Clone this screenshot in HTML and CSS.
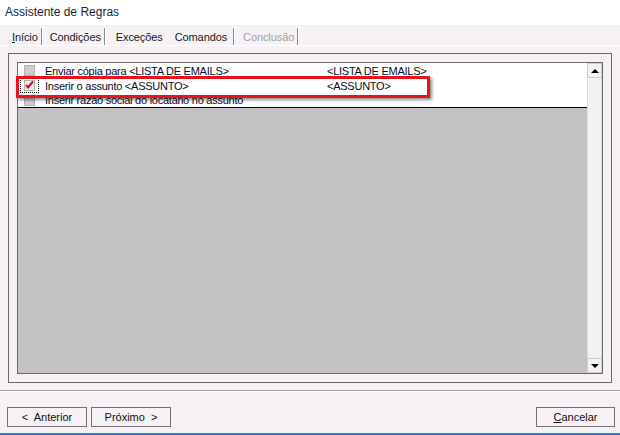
FILE: index.html
```html
<!DOCTYPE html>
<html lang="pt">
<head>
  <meta charset="UTF-8">
  <title>Assistente de Regras</title>
  <link rel="stylesheet" href="styles.css">
</head>
<body>

  <div class="window">
      <div class="titlebar">Assistente de Regras</div>

      <div class="tabs">
          <span class="tab sep"><u>I</u>nício</span>
          <span class="tab sep">Condições</span>
          <span class="tab">Exceções</span>
          <span class="tab active sep">Comandos</span>
          <span class="tab disabled sep">Conclusão</span>
      </div>

      <div class="page">
          <div class="listbox">
              <div class="list">
                  <div class="rows">
                      <div class="row">
                          <span class="check"></span>
                          <span class="col1">Enviar cópia para &lt;LISTA DE EMAILS&gt;</span>
                          <span class="col2">&lt;LISTA DE EMAILS&gt;</span>
                      </div>
                      <div class="row">
                          <span class="focus">
                              <span class="check checked">
                                  <svg width="9" height="9" viewBox="0 0 9 9"><path d="M1 4 L3 6.5 L8 0.5" fill="none" stroke="#e0001b" stroke-width="2"/></svg>
                              </span>
                          </span>
                          <span class="col1">Inserir o assunto &lt;ASSUNTO&gt;</span>
                          <span class="col2">&lt;ASSUNTO&gt;</span>
                      </div>
                      <div class="row last">
                          <span class="check"></span>
                          <span class="col1">Inserir razão social do locatário no assunto</span>
                          <span class="col2"></span>
                      </div>
                  </div>
                  <div class="empty"></div>
              </div>

              <div class="scrollbar">
                  <div class="sb-btn"><span class="arrow up"></span></div>
                  <div class="sb-track"></div>
                  <div class="sb-btn"><span class="arrow down"></span></div>
              </div>

              <div class="highlight"></div>
          </div>
      </div>

      <div class="footer">
          <div class="nav">
              <button class="btn">&lt;&nbsp; Anterior</button>
              <button class="btn">Próximo &nbsp;&gt;</button>
          </div>
          <button class="btn"><u>C</u>ancelar</button>
      </div>
  </div>

</body>
</html>
```

FILE: styles.css
```css
* {
  margin: 0;
  padding: 0;
  box-sizing: border-box;
}

body {
  font-family: "Liberation Sans", Arial, sans-serif;
  font-size: 11px;
  color: #000;
  background-color: #f5f1f5;
  width: 620px;
  height: 435px;
  overflow: hidden;
}

.window {
  display: flex;
  flex-direction: column;
  height: 435px;
  border-bottom: 2px solid #2c7bd6;
}

.titlebar {
  height: 25px;
  background-color: #fff;
  padding: 5px 0 0 5px;
  font-size: 12px;
  color: #1a1f36;
}

.tabs {
  display: flex;
  height: 21px;
  padding: 3px 0 0 9px;
  border-bottom: 1px solid #fff;
}

.tab {
  padding: 3px 3px 0 3px;
  margin-right: 4px;
  color: #1a1a1a;
  letter-spacing: -0.1px;
}

.tab.sep {
  border-right: 1px solid #8a8a8a;
  box-shadow: 1px 0 0 #fff;
}

.tab:nth-child(2) {
  margin-left: 1px;
}

.tab:nth-child(3) {
  margin-left: 4px;
  margin-right: 6px;
}

.tab.active {
  padding-right: 6px;
}

.tab.disabled {
  color: #a3a3a3;
  margin-left: 2px;
}

.page {
  margin: 7px 8px 0 8px;
  height: 330px;
  padding: 8px;
  border: 1px solid #6a6a6a;
}

.listbox {
  position: relative;
  display: flex;
  height: 312px;
  border: 1px solid #6a6a6a;
  background-color: #c4c2c4;
}

.list {
  flex: 1;
  display: flex;
  flex-direction: column;
}

.rows {
  background-color: #fff;
}

.row {
  display: flex;
  align-items: center;
  height: 15px;
  padding-left: 6px;
  letter-spacing: -0.25px;
}

.row.last {
  height: 15px;
  border-bottom: 1px solid #000;
}

.check {
  width: 11px;
  height: 11px;
  background-color: #cfcccf;
  border: 1px solid #b3b0b3;
  margin-right: 10px;
  flex-shrink: 0;
}

.focus {
  display: flex;
  align-items: center;
  justify-content: center;
  width: 19px;
  height: 15px;
  margin-left: -4px;
  margin-right: 6px;
  border: 1px dotted #000;
}

.focus .check {
  margin-right: 0;
}

.check.checked {
  display: flex;
  background-color: #ebe8eb;
}

.col1 {
  width: 282px;
  white-space: nowrap;
  color: #0c0c24;
}

.col2 {
  color: #0c0c24;
}

.empty {
  flex: 1;
}

.scrollbar {
  width: 15px;
  display: flex;
  flex-direction: column;
  background-color: #f4f1f4;
}

.sb-btn {
  height: 15px;
  border: 1px solid #cfcdcf;
  display: flex;
  align-items: center;
  justify-content: center;
  background-color: #f5f2f5;
}

.sb-track {
  flex: 1;
  border-left: 1px solid #dedcde;
  border-right: 1px solid #dedcde;
}

.arrow {
  width: 0;
  height: 0;
  border-left: 4px solid transparent;
  border-right: 4px solid transparent;
}

.arrow.up {
  border-bottom: 4px solid #000;
}

.arrow.down {
  border-top: 4px solid #000;
}

.highlight {
  position: absolute;
  left: -2px;
  top: 13px;
  width: 414px;
  height: 22px;
  border: 3px solid #e8141c;
  box-shadow: 2px 2px 3px rgba(0, 0, 0, 0.45);
}

.footer {
  margin-top: 7px;
  border-top: 1px solid #a0a0a0;
  box-shadow: inset 0 1px 0 #fff;
  padding: 16px 5px 0 7px;
  display: flex;
  justify-content: space-between;
  flex: 1;
}

.nav {
  display: flex;
  gap: 4px;
}

.btn {
  font-family: "Liberation Sans", Arial, sans-serif;
  font-size: 11px;
  width: 80px;
  height: 20px;
  background-color: #f5f1f5;
  border: 1px solid #707070;
  color: #111;
}

.footer > .btn {
  width: 79px;
}
```
